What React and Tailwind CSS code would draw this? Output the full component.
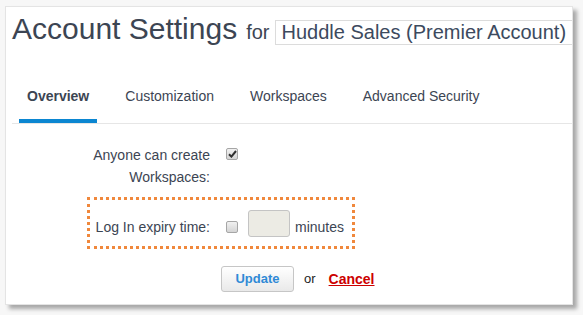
import React from 'react';

const TABS = ['Overview', 'Customization', 'Workspaces', 'Advanced Security'];

const Checkbox = ({ checked = false, className = '' }) => (
  <span
    className={`flex h-[12px] w-[12px] shrink-0 items-center justify-center rounded-[2px] border border-[#a6a6a6] bg-gradient-to-b from-[#f1f1f1] to-[#d4d4d4] ${className}`}
  >
    {checked && (
      <svg width="9" height="8" viewBox="0 0 9 8">
        <path d="M1 4.2 L3.4 6.6 L8 1" fill="none" stroke="#2f2f2f" strokeWidth="2" />
      </svg>
    )}
  </span>
);

export default function App() {
  return (
    <div className="h-[315px] w-[583px] bg-[#f7f7f7] pl-[5px] pt-[6px] font-['Liberation_Sans',Arial,sans-serif]">
      <div className="h-[299px] w-[568px] overflow-hidden border border-[#e4e4e4] bg-white shadow-[4px_4px_4px_rgba(0,0,0,0.32)]">
        {/* header */}
        <div className="flex items-baseline whitespace-nowrap pl-[6px] pt-[5px]">
          <h1 className="shrink-0 text-[30px] leading-[34px] text-[#3c4553]">Account Settings</h1>
          <span className="ml-[9px] shrink-0 text-[20px] leading-[23px] text-[#3c4553]">for</span>
          <div className="ml-[6px] w-[310px] shrink-0 border border-[#dcdcdc] pl-[5px] text-[20px] leading-[23px] text-[#3c4a5e]">
            Huddle Sales (Premier Account)
          </div>
        </div>

        {/* tabs */}
        <div className="ml-[6px] mt-[42px] border-b border-[#e6e6e6] pl-[7px]">
          <div className="flex gap-[20px]">
            {TABS.map((tab, i) => (
              <div
                key={tab}
                className={`border-b-4 px-[8px] pb-[15px] text-[14px] leading-[16px] text-[#3c4553] ${
                  i === 0 ? 'border-[#0b86d1] font-bold' : 'border-transparent'
                }`}
              >
                {tab}
              </div>
            ))}
          </div>
        </div>

        {/* form */}
        <div className="mt-[20px] text-[14px] leading-[22px] text-[#3c4553]">
          <div className="ml-[84px] flex">
            <div className="w-[120px] text-right">Anyone can create Workspaces:</div>
            <Checkbox checked className="ml-[16px] mt-[4px]" />
          </div>

          <div className="ml-[81px] mt-[9px] flex h-[52px] w-[268px] items-center border-[3px] border-dotted border-[#f0883c]">
            <div className="mt-[8px] w-[120px] text-right">Log In expiry time:</div>
            <Checkbox className="ml-[16px] mt-[8px]" />
            <div className="ml-[10px] h-[27px] w-[42px] rounded-[3px] border border-[#c4c4c4] bg-[#ecebe4]" />
            <span className="ml-[5px] mt-[8px]">minutes</span>
          </div>

          <div className="ml-[215px] mt-[17px] flex items-center">
            <button className="h-[26px] w-[73px] rounded-[3px] border border-[#c6c6c6] bg-gradient-to-b from-white to-[#e9e9e9] text-[13px] font-bold text-[#2f8ad6]">
              Update
            </button>
            <span className="ml-[10px] text-[13px] text-[#222]">or</span>
            <a className="ml-[13px] text-[14px] font-bold text-[#cc0000] underline">Cancel</a>
          </div>
        </div>
      </div>
    </div>
  );
}
